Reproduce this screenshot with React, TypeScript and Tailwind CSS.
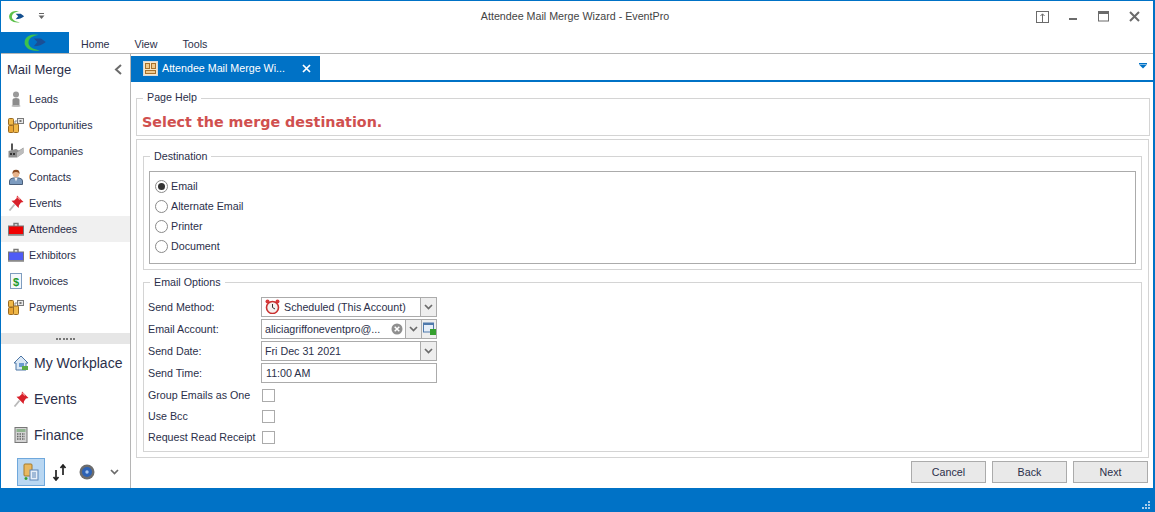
import React from "react";

const font = { fontFamily: '"Liberation Sans", sans-serif' };

function Pin({ s = 16 }: { s?: number }) {
  return (
    <svg width={s} height={s} viewBox="0 0 16 16">
      <path d="M1.5 15.5 L6.5 9.5" stroke="#b9b9b9" strokeWidth="1.8" />
      <path d="M9 0.5 L15.5 7 L13 7.6 L11 10.2 L10.6 13 L3.5 5.8 L6.2 5.4 L8.6 3.2 Z" fill="#d8202a" />
      <path d="M9.5 2 L12 4.5" stroke="#f49a9a" strokeWidth="1.2" />
    </svg>
  );
}
function Coins() {
  return (
    <svg width="16" height="16" viewBox="0 0 16 16">
      <rect x="9.5" y="1.5" width="6" height="5" fill="#e8e8e8" stroke="#7a7a7a" />
      <rect x="11.5" y="3" width="2" height="2" fill="#777" />
      <path d="M7 4 H9.5 M7 4 V7" stroke="#888" />
      <rect x="0.5" y="1.5" width="5" height="6.5" rx="1" fill="#f0b94a" stroke="#9a6a20" />
      <rect x="0.5" y="8.5" width="5" height="7" rx="1" fill="#e9a534" stroke="#9a6a20" />
      <rect x="5.5" y="7" width="5" height="8.5" rx="1" fill="#f0b94a" stroke="#9a6a20" />
    </svg>
  );
}
function Badge({ color }: { color: string }) {
  return (
    <svg width="16" height="16" viewBox="0 0 16 16">
      <rect x="0.5" y="5" width="15" height="9" fill={color} stroke="#777" />
      <rect x="0" y="13" width="16" height="1.5" fill="#8a8a8a" />
      <path d="M6 5 V2.5 H10 V5" fill="none" stroke="#777" strokeWidth="1.4" />
    </svg>
  );
}
const icons: Record<string, React.ReactNode> = {
  Leads: (
    <svg width="16" height="16" viewBox="0 0 16 16">
      <circle cx="8" cy="3.5" r="3" fill="#9a9a9a" />
      <path d="M4.5 15 V9 Q4.5 7 8 7 Q11.5 7 11.5 9 V15 Z" fill="#8c8c8c" />
      <ellipse cx="8" cy="15" rx="4.5" ry="1" fill="#bdbdbd" />
    </svg>
  ),
  Opportunities: <Coins />,
  Companies: (
    <svg width="16" height="16" viewBox="0 0 16 16">
      <rect x="3" y="0.5" width="2" height="7" fill="#555" />
      <path d="M0.5 8 L8 6 L11 7.5 L15.5 4.5 V10 L9 14.5 L0.5 14.5 Z" fill="#8d8d8d" />
      <path d="M9 9.5 L15.5 5 V10 L9 14.5 Z" fill="#bcbcbc" />
      <rect x="2" y="10" width="2" height="2" fill="#333" />
      <rect x="5" y="10" width="2" height="2" fill="#333" />
    </svg>
  ),
  Contacts: (
    <svg width="16" height="16" viewBox="0 0 16 16">
      <path d="M1.5 15.5 V12 Q1.5 9.5 5 9 H11 Q14.5 9.5 14.5 12 V15.5 Z" fill="#7c9bbf" stroke="#4b5f7a" />
      <path d="M6.5 9 L8 12.5 L9.5 9 Z" fill="#f4f4f4" />
      <circle cx="8" cy="5" r="3.3" fill="#e8b48c" />
      <path d="M4.5 5 Q4 0.7 8 0.7 Q12 0.7 11.5 5 Q10.5 2.8 8 3 Q5.5 2.8 4.5 5Z" fill="#8a4a20" />
    </svg>
  ),
  Events: <Pin />,
  Attendees: <Badge color="#f00000" />,
  Exhibitors: <Badge color="#4f5bf5" />,
  Invoices: (
    <svg width="16" height="16" viewBox="0 0 16 16">
      <rect x="2.5" y="0.5" width="11" height="15" fill="#f4f8fc" stroke="#7f9dbf" />
      <text x="8" y="12.5" textAnchor="middle" fontSize="11" fontWeight="700" fill="#1f9a2a" fontFamily="Liberation Sans">$</text>
    </svg>
  ),
  Payments: <Coins />,
};

const items = ["Leads", "Opportunities", "Companies", "Contacts", "Events", "Attendees", "Exhibitors", "Invoices", "Payments"];

function Logo({ w, dark }: { w: number; dark?: boolean }) {
  return (
    <svg width={w} height={w * 0.8} viewBox="0 0 20 16">
      <path d="M13 1.5 Q5 0 2 5 Q0 9 3.5 12.5 Q7 15.5 14 14.5 Q7 13.5 5 10 Q3.5 6 7 3.5 Q9.5 2 13 1.5Z" fill={dark ? "#3cc24e" : "#5cc04a"} />
      <path d="M9 4.5 H15 L19 7.5 Q15 11 9 11 L12 7.5 Z" fill={dark ? "#1a4f96" : "#14508f"} />
    </svg>
  );
}

function Chevron({ color = "#6b6b6b" }: { color?: string }) {
  return (
    <svg width="9" height="6" viewBox="0 0 9 6">
      <path d="M1 1 L4.5 4.5 L8 1" fill="none" stroke={color} strokeWidth="1.7" />
    </svg>
  );
}

function DropBtn() {
  return (
    <span className="flex h-full w-[16px] items-center justify-center border-l border-[#ababab] bg-[#eeeeee]">
      <Chevron />
    </span>
  );
}

function Field({ label, children }: { label: string; children: React.ReactNode }) {
  return (
    <div className="flex h-[22px] items-center">
      <span className="w-[113px] shrink-0 pt-[1px]">{label}</span>
      {children}
    </div>
  );
}
function Check({ label }: { label: string }) {
  return (
    <div className="flex h-[21px] items-center">
      <span className="w-[114px] shrink-0 whitespace-nowrap">{label}</span>
      <span className="h-[13px] w-[13px] border border-[#ababab] bg-white" />
    </div>
  );
}
function Radio({ label, on }: { label: string; on?: boolean }) {
  return (
    <div className="flex h-[20px] items-center gap-[3px]">
      <span className="flex h-[13px] w-[13px] items-center justify-center rounded-full border border-[#8a8a8a] bg-white">
        {on && <span className="h-[7px] w-[7px] rounded-full bg-[#333333]" />}
      </span>
      <span>{label}</span>
    </div>
  );
}
function Btn({ label }: { label: string }) {
  return (
    <button className="flex h-[22px] w-[75px] items-center justify-center border border-[#ababab] bg-[#e9e9e9] pt-[1px] text-[#2b2f4a]">
      {label}
    </button>
  );
}
function NavBig({ icon, label }: { icon: React.ReactNode; label: string }) {
  return (
    <div className="flex h-[36px] items-center gap-[5px] pl-[11px] text-[14px] text-[#2b2f4a]">
      <span className="flex w-[17px] justify-center">{icon}</span>
      <span>{label}</span>
    </div>
  );
}

export default function App() {
  return (
    <div style={font} className="flex h-[512px] w-[1155px] flex-col overflow-hidden border-t border-r-2 border-l border-[#0072c6] bg-white text-[10.7px] leading-none text-[#2b2f4a]">
      {/* Title bar */}
      <div className="relative flex h-[31px] shrink-0 items-center pl-[7px]">
        <Logo w={17} />
        <svg className="ml-[13px]" width="7" height="7" viewBox="0 0 7 7">
          <rect x="1" y="0" width="5" height="1" fill="#666" />
          <path d="M0.5 2.5 H6.5 L3.5 6 Z" fill="#666" />
        </svg>
        <div className="flex-1 pl-[69px] text-center text-[#444444]">Attendee Mail Merge Wizard - EventPro</div>
        <div className="mr-[13px] flex items-center gap-[19px]">
          <svg width="13" height="12" viewBox="0 0 13 12">
            <rect x="0.5" y="0.5" width="12" height="11" fill="none" stroke="#6b6b6b" />
            <path d="M6.5 11 V3 M4.5 5 L6.5 2.8 L8.5 5" fill="none" stroke="#6b6b6b" />
          </svg>
          <svg width="11" height="11" viewBox="0 0 11 11"><rect x="1" y="7" width="8" height="2" fill="#6b6b6b" /></svg>
          <svg width="11" height="11" viewBox="0 0 11 11"><rect x="0.5" y="0.5" width="10" height="9.5" fill="none" stroke="#6b6b6b" /><rect x="0" y="0" width="11" height="3" fill="#6b6b6b" /></svg>
          <svg className="ml-[1px]" width="11" height="11" viewBox="0 0 11 11"><path d="M1 1 L10 10 M10 1 L1 10" stroke="#6b6b6b" strokeWidth="2" /></svg>
        </div>
      </div>

      {/* Ribbon tabs */}
      <div className="flex h-[22px] shrink-0 border-b border-[#b5b5b5]">
        <div className="flex h-[21px] w-[68px] items-center justify-center bg-[#0072c6]">
          <Logo w={24} dark />
        </div>
        <div className="flex items-center pt-[4px] text-[#2b2f4a]">
          <span className="ml-[12px]">Home</span>
          <span className="ml-[25px]">View</span>
          <span className="ml-[25px]">Tools</span>
        </div>
      </div>

      <div className="flex min-h-0 flex-1">
        {/* Sidebar */}
        <div className="flex w-[130px] shrink-0 flex-col border-r border-[#b5b5b5]">
          <div className="flex h-[30px] shrink-0 items-center justify-between pr-[7px] pl-[6px] text-[13px]">
            <span>Mail Merge</span>
            <svg width="9" height="11" viewBox="0 0 9 11"><path d="M7 1 L2 5.5 L7 10" fill="none" stroke="#6b6b6b" strokeWidth="2" /></svg>
          </div>
          <div className="flex flex-col pt-[2px]">
            {items.map((n) => (
              <div key={n} className={`flex h-[26px] items-center gap-[5px] pl-[7px] ${n === "Attendees" ? "bg-[#f0f0f0]" : ""}`}>
                <span className="flex w-[16px] justify-center">{icons[n]}</span>
                <span>{n}</span>
              </div>
            ))}
          </div>
          <div className="mt-[13px] flex h-[11px] shrink-0 items-center justify-center gap-[1.5px] bg-[#e6e6e6]">
            {[0, 1, 2, 3, 4, 5].map((i) => (
              <span key={i} className="h-[2px] w-[2px] bg-[#777777]" />
            ))}
          </div>
          <div className="mt-[1px] flex flex-col">
            <NavBig
              label="My Workplace"
              icon={
                <svg width="16" height="16" viewBox="0 0 16 16">
                  <path d="M1 8 L8 1 L15 8 L13 8 V15 H3 V8 Z" fill="#dbe8f5" stroke="#4d76a6" />
                  <rect x="6" y="8" width="5" height="4" fill="#6b9bd0" />
                  <rect x="9" y="11" width="6" height="4" fill="#5cab45" />
                </svg>
              }
            />
            <NavBig label="Events" icon={<Pin />} />
            <NavBig
              label="Finance"
              icon={
                <svg width="16" height="16" viewBox="0 0 16 16">
                  <rect x="2" y="0.5" width="12" height="15" fill="#d4d4d4" stroke="#777" />
                  <rect x="3.5" y="2" width="9" height="3" fill="#8fb38f" />
                  <path d="M4 7 H12 M4 9.5 H12 M4 12 H12" stroke="#666" strokeDasharray="1.5 1" strokeWidth="1.4" />
                </svg>
              }
            />
          </div>
          <div className="mt-[5px] flex h-[28px] items-center pl-[16px]">
            <div className="flex h-[28px] w-[28px] items-center justify-center border border-[#6fa8dc] bg-[#b9d7f2]">
              <svg width="16" height="18" viewBox="0 0 16 18">
                <rect x="1" y="1" width="8" height="12" rx="1" fill="#e8b860" stroke="#a57a2a" />
                <rect x="7" y="7" width="8" height="10" fill="#e6eef8" stroke="#5d86b8" />
                <path d="M9 10 H13 M9 12 H13 M9 14 H13" stroke="#5d86b8" />
                <path d="M3 14 V17 M1.5 15.5 H4.5" stroke="#2f9e2f" strokeWidth="1.4" />
              </svg>
            </div>
            <span className="ml-[6px] flex w-[16px] justify-center">
              <svg width="15" height="17" viewBox="0 0 15 17">
                <path d="M4 6 V16 M1.5 13 L4 16 L6.5 13" fill="none" stroke="#222" strokeWidth="1.7" />
                <path d="M11 11 V1 M8.5 4 L11 1 L13.5 4" fill="none" stroke="#222" strokeWidth="1.7" />
              </svg>
            </span>
            <span className="ml-[12px]">
              <svg width="16" height="16" viewBox="0 0 16 16">
                <circle cx="8" cy="8" r="7.5" fill="#6c6c6c" />
                <circle cx="8" cy="8" r="5" fill="#2d62b5" />
                <circle cx="8" cy="8" r="1.7" fill="#a8c6ee" />
              </svg>
            </span>
            <span className="ml-[15px]"><Chevron /></span>
          </div>
        </div>

        {/* Right pane */}
        <div className="flex min-w-0 flex-1 flex-col">
          {/* Document tab strip */}
          <div className="flex h-[28px] shrink-0 items-end justify-between border-b-2 border-[#0072c6]">
            <div className="flex h-[24px] w-[189px] items-center bg-[#0072c6] pl-[12px] text-white">
              <svg width="15" height="15" viewBox="0 0 15 15">
                <rect x="0.5" y="0.5" width="14" height="14" fill="#f6e7c8" stroke="#d9d9d9" />
                <rect x="2.5" y="2.5" width="4" height="5" fill="#efc98c" stroke="#a8712a" />
                <rect x="8.5" y="2.5" width="4" height="5" fill="#efc98c" stroke="#a8712a" />
                <rect x="2.5" y="9.5" width="10" height="3" fill="#efc98c" stroke="#a8712a" />
              </svg>
              <span className="ml-[4px] whitespace-nowrap">Attendee Mail Merge Wi...</span>
              <svg className="ml-[17px]" width="9" height="9" viewBox="0 0 9 9"><path d="M1 1 L8 8 M8 1 L1 8" stroke="#fff" strokeWidth="1.7" /></svg>
            </div>
            <svg className="mr-[6px] mb-[11px]" width="8" height="6" viewBox="0 0 8 6"><rect width="8" height="1.5" fill="#0072c6" /><path d="M0.5 2 H7.5 L4 5.5 Z" fill="#0072c6" /></svg>
          </div>

          {/* Body */}
          <div className="flex min-h-0 flex-1 flex-col pt-[10px] pr-[3px] pl-[5px]">
            <fieldset className="h-[44px] shrink-0 border border-[#d4d4d4] px-[5px]">
              <legend className="ml-[1px] px-[4px] pb-[2px]">Page Help</legend>
              <div style={{ fontFamily: '"DejaVu Sans", sans-serif' }} className="pt-[10px] text-[14.3px] font-bold text-[#d0504f]">Select the merge destination.</div>
            </fieldset>

            <div className="mt-[3px] mr-[1px] flex h-[319px] shrink-0 flex-col gap-[7px] border border-[#d4d4d4] px-[6px] pt-[11px]">
              <fieldset className="h-[119px] shrink-0 border border-[#d4d4d4] px-[5px] pt-[9px]">
                <legend className="ml-[1px] px-[4px]">Destination</legend>
                <div className="flex h-[93px] flex-col border border-[#ababab] pt-[5px] pl-[5px]">
                  <Radio label="Email" on />
                  <Radio label="Alternate Email" />
                  <Radio label="Printer" />
                  <Radio label="Document" />
                </div>
              </fieldset>

              <fieldset className="h-[175px] shrink-0 border border-[#d4d4d4] px-[4px] pt-[8px]">
                <legend className="ml-[2px] px-[4px]">Email Options</legend>
                <div className="flex w-[290px] flex-col">
                  <Field label="Send Method:">
                    <div className="flex h-[20px] w-[176px] items-center border border-[#ababab]">
                      <span className="ml-[3px] flex w-[15px] justify-center">
                        <svg width="15" height="15" viewBox="0 0 15 15">
                          <circle cx="2.5" cy="2.5" r="2" fill="#d8383a" />
                          <circle cx="12.5" cy="2.5" r="2" fill="#d8383a" />
                          <circle cx="7.5" cy="8.5" r="6" fill="#f5f0ee" stroke="#c9302f" strokeWidth="1.6" />
                          <path d="M7.5 5 V8.5 L10 10" fill="none" stroke="#333" />
                        </svg>
                      </span>
                      <span className="ml-[4px] flex-1 whitespace-nowrap pt-[1px]">Scheduled (This Account)</span>
                      <DropBtn />
                    </div>
                  </Field>
                  <Field label="Email Account:">
                    <div className="flex h-[20px] w-[176px] items-center border border-[#ababab]">
                      <span className="ml-[3px] flex-1 whitespace-nowrap pt-[1px]">aliciagriffoneventpro@...</span>
                      <svg className="mr-[2px]" width="12" height="12" viewBox="0 0 12 12">
                        <circle cx="6" cy="6" r="5.5" fill="#8f8f8f" />
                        <path d="M3.7 3.7 L8.3 8.3 M8.3 3.7 L3.7 8.3" stroke="#fff" strokeWidth="1.5" />
                      </svg>
                      <DropBtn />
                      <span className="flex h-full w-[15px] items-center justify-center border-l border-[#ababab] bg-[#eeeeee]">
                        <svg width="13" height="13" viewBox="0 0 13 13">
                          <rect x="0.5" y="1" width="10" height="9" fill="#e6eef8" stroke="#4f79ab" />
                          <rect x="0.5" y="1" width="10" height="2" fill="#4f79ab" />
                          <rect x="7" y="7" width="6" height="6" fill="#35a02f" />
                        </svg>
                      </span>
                    </div>
                  </Field>
                  <Field label="Send Date:">
                    <div className="flex h-[20px] w-[176px] items-center border border-[#ababab]">
                      <span className="ml-[3px] flex-1 pt-[1px]">Fri Dec 31 2021</span>
                      <DropBtn />
                    </div>
                  </Field>
                  <Field label="Send Time:">
                    <div className="flex h-[20px] w-[176px] items-center border border-[#ababab] pt-[1px] pl-[4px]">11:00 AM</div>
                  </Field>
                  <div className="mt-[1px] flex flex-col">
                    <Check label="Group Emails as One" />
                    <Check label="Use Bcc" />
                    <Check label="Request Read Receipt" />
                  </div>
                </div>
              </fieldset>
            </div>

            <div className="mt-[3px] mr-[2px] flex justify-end gap-[6px]">
              <Btn label="Cancel" />
              <Btn label="Back" />
              <Btn label="Next" />
            </div>
          </div>
        </div>
      </div>

      {/* Status bar */}
      <div className="flex h-[24px] shrink-0 items-end justify-end bg-[#0072c6] pr-[2px] pb-[2px]">
        <svg width="9" height="9" viewBox="0 0 9 9" fill="#a9cdea">
          <rect x="6" y="0" width="2" height="2" />
          <rect x="3" y="3" width="2" height="2" />
          <rect x="6" y="3" width="2" height="2" />
          <rect x="0" y="6" width="2" height="2" />
          <rect x="3" y="6" width="2" height="2" />
          <rect x="6" y="6" width="2" height="2" />
        </svg>
      </div>
    </div>
  );
}
